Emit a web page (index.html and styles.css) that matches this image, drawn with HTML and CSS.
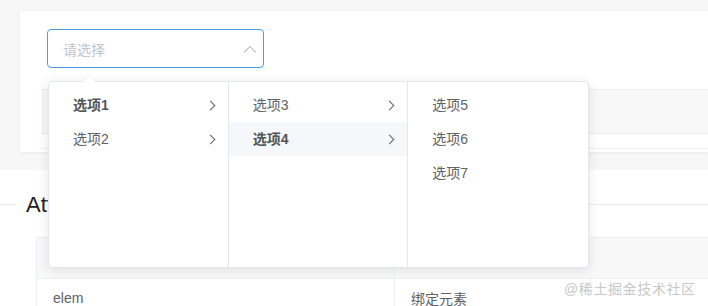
FILE: index.html
```html
<!DOCTYPE html>
<html lang="zh">
<head>
    <meta charset="UTF-8">
    <title>级联选择器</title>
    <link rel="stylesheet" href="styles.css">
</head>
<body>
    <div class="demo">
        <div class="card">
            <div class="select">
                <span class="placeholder">请选择</span>
                <svg class="caret" width="14" height="8" viewBox="0 0 14 8"><path d="M1 7.5 L7 1.5 L13 7.5" fill="none" stroke="#c0c4cc" stroke-width="1.2"/></svg>
            </div>
            <div class="bar"></div>
            <div class="bar-sub"></div>
        </div>
    </div>

    <div class="heading">
        <span class="rule short"></span>
        <h3>Attributes</h3>
        <span class="rule"></span>
    </div>

    <table class="attrs">
        <tr><th></th><th></th></tr>
        <tr><td>elem</td><td>绑定元素</td></tr>
    </table>

    <div class="menu">
        <span class="pointer"></span>
        <ul class="col">
            <li class="on">选项1<i class="chev"></i></li>
            <li>选项2<i class="chev"></i></li>
        </ul>
        <ul class="col">
            <li>选项3<i class="chev"></i></li>
            <li class="on hover">选项4<i class="chev"></i></li>
        </ul>
        <ul class="col">
            <li>选项5</li>
            <li>选项6</li>
            <li>选项7</li>
        </ul>
    </div>

    <div class="mark">@稀土掘金技术社区</div>
</body>
</html>
```
FILE: styles.css
```css
body { margin: 0; background: #fff; font-family: "Liberation Sans", "Noto Sans CJK SC", sans-serif; font-size: 14px; color: #606266; overflow: hidden; height: 306px; position: relative; }
.demo { background: #f7f7f8; padding: 11px 0 18px 20px; }
.card { background: #fff; height: 141px; padding: 18px 0 0 27px; box-sizing: border-box; box-shadow: 0 1px 3px rgba(0,0,0,.06); }
.select { width: 217px; height: 39px; box-sizing: border-box; border: 1px solid #4a9de8; border-radius: 4px; display: flex; align-items: center; justify-content: space-between; padding: 0 6px 0 15px; }
.placeholder { color: #c0c4cc; }
.bar { margin: 21px 0 0 -5px; height: 43px; background: #f8f8f9; border-top: 1px solid #eceef2; border-bottom: 1px solid #eceef2; border-left: 1px solid #eceef2; }
.bar-sub { margin-left: -5px; height: 14px; border-bottom: 1px solid #eef0f3; }

.heading { display: flex; align-items: center; height: 67px; padding-top: 2px; box-sizing: border-box; }
.heading h3 { margin: 0 10px; font-size: 22px; font-weight: normal; color: #222; }
.rule { flex: 1; height: 1px; background: #eaeaea; }
.rule.short { flex: 0 0 16px; }

.attrs { margin-left: 36px; border-collapse: collapse; width: 700px; }
.attrs th { background: #f8f8f9; height: 40px; border: 1px solid #ebeef5; padding: 0; }
.attrs td { border: 1px solid #ebeef5; border-bottom: none; height: 38px; padding: 0 16px; vertical-align: middle; }
.attrs td:first-child, .attrs th:first-child { width: 325px; }

.menu { position: absolute; left: 48px; top: 81px; width: 541px; height: 187px; background: #fff; border: 1px solid #e4e7ed; border-radius: 4px; box-shadow: 0 2px 12px rgba(0,0,0,.1); display: flex; box-sizing: border-box; }
.pointer { position: absolute; left: 34px; top: -6px; width: 0; height: 0; border: 6px solid transparent; border-top: none; border-bottom-color: #fff; filter: drop-shadow(0 -1px 1px rgba(0,0,0,.03)); }
.col { list-style: none; margin: 0; padding: 6px 0; width: 180px; box-sizing: border-box; border-right: 1px solid #e4e7ed; }
.col:last-child { border-right: none; }
.col li { height: 34px; line-height: 34px; padding: 0 18px 0 24px; position: relative; }
.col li.on { font-weight: bold; color: #555; }
.col li.hover { background: #f5f7fa; }
.chev { position: absolute; right: 14px; top: 14px; width: 6px; height: 6px; border-right: 1.3px solid #606266; border-top: 1.3px solid #606266; transform: rotate(45deg); }

.mark { position: absolute; left: 564px; top: 278px; font-size: 14px; color: #c8c8c8; letter-spacing: 0.6px; white-space: nowrap; }
```
